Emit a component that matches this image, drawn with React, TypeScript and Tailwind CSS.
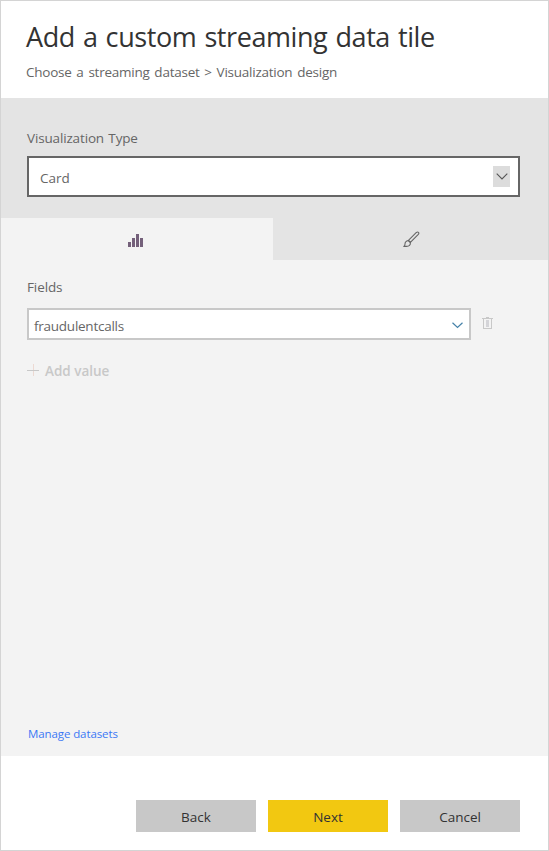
import React from 'react';

function ChartIcon() {
  return (
    <svg width="16" height="13" viewBox="0 0 16 13" fill="#74607a" shapeRendering="crispEdges">
      <path d="M0 8h3v5H0zM4 4h3v9H4zM8 0h3v13H8zM12 4h3v9h-3z" />
    </svg>
  );
}

function BrushIcon() {
  return (
    <svg width="17" height="17" viewBox="0 0 17 17" fill="none" stroke="#666" strokeWidth="1.1" strokeLinejoin="round">
      <path d="M5.4 9.4 L13.4 1.4 Q14.8 0.6 15.6 1.5 Q16.2 2.4 15.3 3.4 L7.4 11.4 Z" />
      <path d="M5.3 9.5 L7.4 11.5 Q7.6 15.3 3.5 15.4 H0.8 Q2 14.6 2 13 Q2 10.2 5.3 9.5 Z" />
    </svg>
  );
}

function TrashIcon() {
  return (
    <svg width="11" height="13" viewBox="0 0 11 13" fill="none" shapeRendering="crispEdges">
      <path d="M4 3h3v7H4z" fill="#d4d4d8" />
      <path d="M0 1.5H11M4 0.5H7M1.5 2V11.5H9.5V2" stroke="#c8c8c8" />
    </svg>
  );
}

function FooterButton({ label, primary = false }: { label: string; primary?: boolean }) {
  return (
    <button
      className={`flex h-8 w-[120px] justify-center pt-[7px] text-[13.5px] leading-5 text-[#333] ${primary ? 'bg-[#f2c811]' : 'bg-[#c8c8c8]'}`}
    >
      {label}
    </button>
  );
}

export default function App() {
  return (
    <div className="flex h-[851px] w-[549px] flex-col border border-[#d4d4d4] bg-white font-['Open_Sans','Noto_Sans',sans-serif] text-[13.5px] leading-5 text-[#666]">
      <header className="h-[97px] shrink-0 pl-[25px] pt-[18px] whitespace-nowrap">
        <h1 className="text-[27px] leading-9 tracking-[-0.42px] [word-spacing:1.5px] text-[#333]">Add a custom streaming data tile</h1>
        <p className="mt-[7px] tracking-[-0.24px] [word-spacing:1.5px]">Choose a streaming dataset &gt; Visualization design</p>
      </header>
      <section className="h-[120px] shrink-0 bg-[#e4e4e4] px-[26px] pt-[30px]">
        <div className="tracking-[-0.15px] [word-spacing:1px]">Visualization Type</div>
        <div className="mt-2 mr-[2px] flex h-[41px] items-start justify-between border-2 border-[#666] bg-white pl-[11px] pr-2">
          <span className="mt-[10px]">Card</span>
          <span className="mt-2 flex h-[21px] w-[17px] justify-center bg-[#dcdcdc] pt-[7px]">
            <svg width="12" height="7" viewBox="0 0 12 7" fill="none" stroke="#555" strokeWidth="1.1">
              <path d="M0.7 0.6L6 5.9L11.3 0.6" />
            </svg>
          </span>
        </div>
      </section>
      <nav className="flex h-[42px] shrink-0">
        <div className="flex w-[272px] bg-[#f3f3f3] pl-[127px] pt-4"><ChartIcon /></div>
        <div className="flex flex-1 bg-[#e4e4e4] pl-[130px] pt-[13px]"><BrushIcon /></div>
      </nav>
      <main className="flex h-[496px] shrink-0 flex-col bg-[#f3f3f3] pl-[26px] pt-[17px]">
        <div className="tracking-[-0.1px]">Fields</div>
        <div className="mt-[11px] flex">
          <div className="flex h-8 w-[444px] justify-between border-2 border-[#c8c8c8] bg-white pl-[5px] pr-[6px]">
            <span className="mt-[6px] tracking-[-0.25px]">fraudulentcalls</span>
            <svg className="mt-3" width="11" height="7" viewBox="0 0 11 7" fill="none" stroke="#4682a9" strokeWidth="1.2">
              <path d="M0.5 0.7L5.5 5.4L10.5 0.7" />
            </svg>
          </div>
          <div className="ml-[11px] mt-[9px]"><TrashIcon /></div>
        </div>
        <div className="mt-[21px] flex font-semibold text-[#c8c8c8]">
          <svg className="mt-[3px] mr-[6px]" width="12" height="12" viewBox="0 0 12 12" fill="none" shapeRendering="crispEdges">
            <path d="M6.5 0V12" stroke="#ecd9d2" />
            <path d="M0 6.5H12" stroke="#c8c8c8" />
          </svg>
          <span>Add value</span>
        </div>
        <a className="mt-auto mb-[13px] ml-[1px] text-[11.5px] leading-[18px] tracking-[-0.1px] text-[#3b78f5]">Manage datasets</a>
      </main>
      <footer className="flex justify-end gap-3 pr-7 pt-11">
        <FooterButton label="Back" />
        <FooterButton label="Next" primary />
        <FooterButton label="Cancel" />
      </footer>
    </div>
  );
}
